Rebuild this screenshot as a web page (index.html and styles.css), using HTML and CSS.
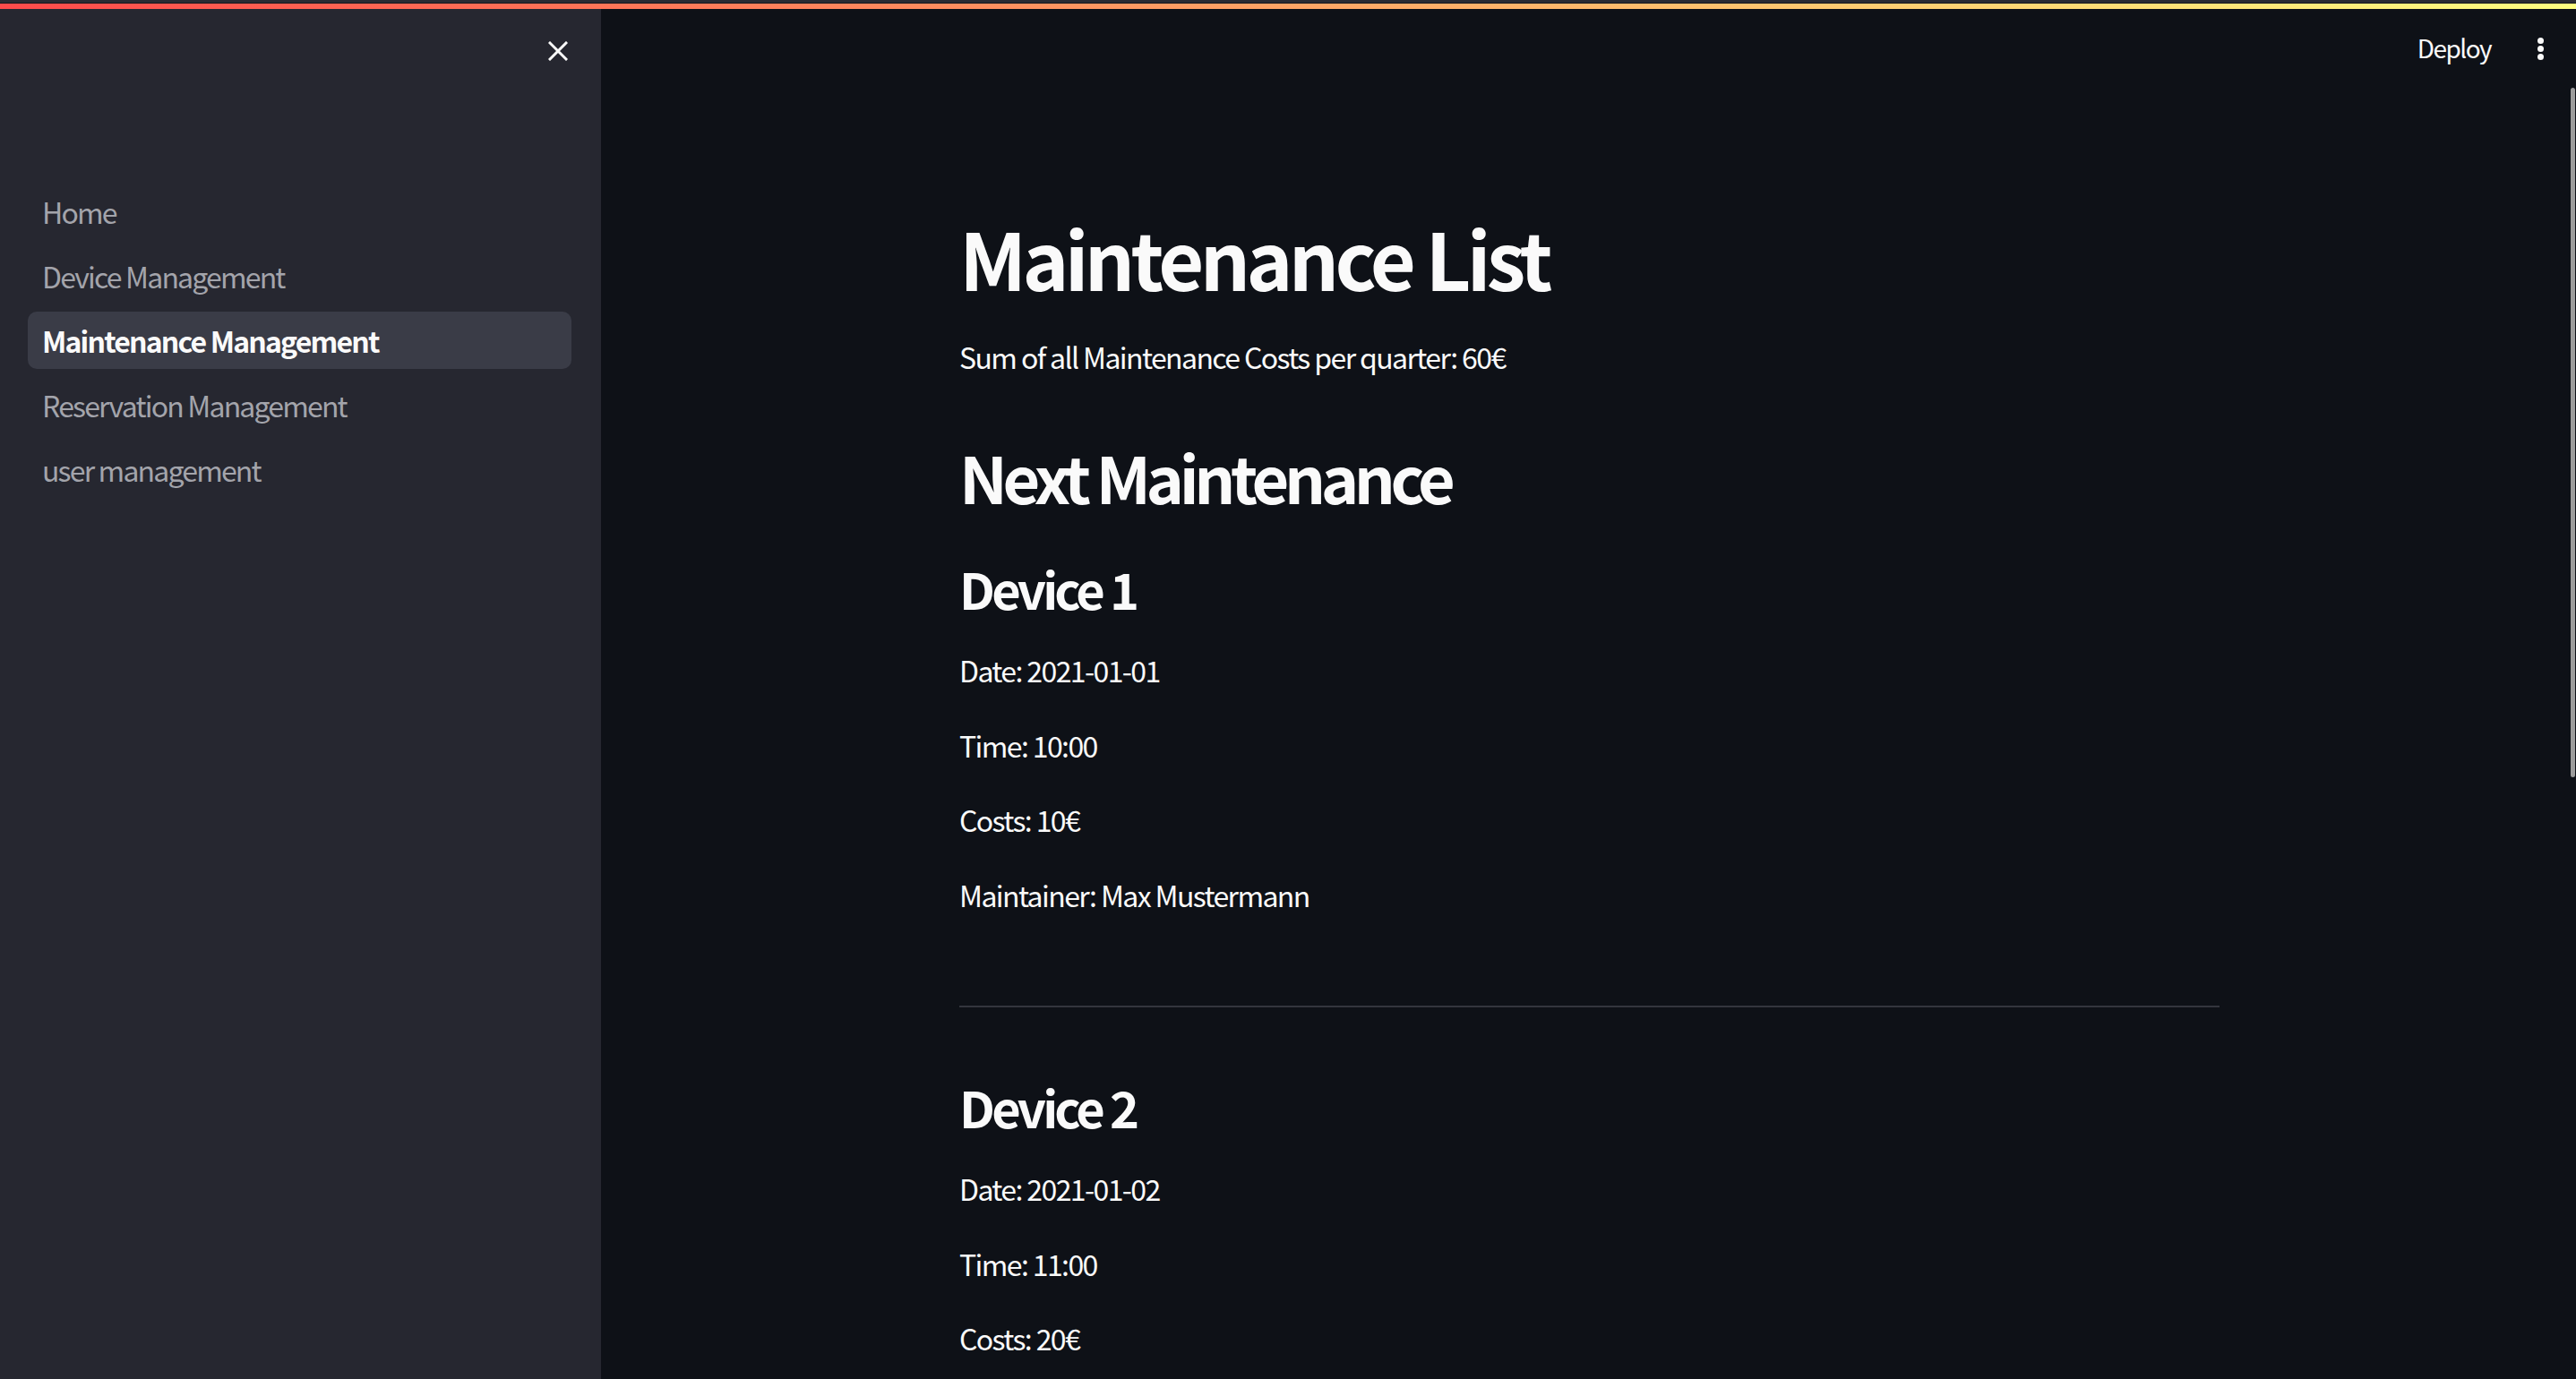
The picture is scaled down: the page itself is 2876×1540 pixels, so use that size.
FILE: index.html
```html
<!DOCTYPE html>
<html lang="en">
<head>
<meta charset="utf-8">
<title>Maintenance Management</title>
<link rel="stylesheet" href="styles.css">
</head>
<body>
<div class="page">
  <div class="topstrip"></div>
  <div class="decoration"></div>
  <div class="app">
    <aside class="sidebar">
      <div class="sidebar-head">
        <button class="close-btn" aria-label="Close sidebar">
          <svg width="22" height="22" viewBox="0 0 22 22"><path d="M2 2 L20 20 M20 2 L2 20" stroke="#fafafa" stroke-width="3" stroke-linecap="square" fill="none"/></svg>
        </button>
      </div>
      <nav class="nav">
        <a class="nav-item">Home</a>
        <a class="nav-item">Device Management</a>
        <a class="nav-item active">Maintenance Management</a>
        <a class="nav-item">Reservation Management</a>
        <a class="nav-item">user management</a>
      </nav>
    </aside>
    <main class="main">
      <header class="header">
        <span class="deploy">Deploy</span>
        <span class="menu-dots"><i></i><i></i><i></i></span>
      </header>
      <div class="content">
        <h1 class="title">Maintenance List</h1>
        <p class="text sum">Sum of all Maintenance Costs per quarter: 60€</p>
        <h2 class="subtitle">Next Maintenance</h2>
        <h3 class="device">Device 1</h3>
        <p class="text first">Date: 2021-01-01</p>
        <p class="text">Time: 10:00</p>
        <p class="text">Costs: 10€</p>
        <p class="text">Maintainer: Max Mustermann</p>
        <hr class="divider">
        <h3 class="device after-hr">Device 2</h3>
        <p class="text first">Date: 2021-01-02</p>
        <p class="text">Time: 11:00</p>
        <p class="text">Costs: 20€</p>
        <p class="text">Maintainer: Max Mustermann</p>
      </div>
      <div class="scroll-thumb"></div>
    </main>
  </div>
</div>
</body>
</html>
```
FILE: styles.css
```css
* { box-sizing: border-box; }
html, body {
  margin: 0;
  padding: 0;
  height: 100%;
  overflow: hidden;
  background: #0e1117;
}
body {
  font-family: "Noto Sans CJK SC", "Source Sans Pro", "Noto Sans", sans-serif;
  color: #fafafa;
}
.page {
  display: flex;
  flex-direction: column;
  height: 100vh;
}
.topstrip {
  height: 4px;
  background: #2b2b33;
  border-bottom: 1px solid #16171d;
  flex: none;
}
.decoration {
  height: 6px;
  flex: none;
  background: linear-gradient(90deg, #ff4b4b, #fffd80);
}
.app {
  flex: 1;
  display: flex;
  min-height: 0;
}
.sidebar {
  width: 671px;
  flex: none;
  background: #262730;
  display: flex;
  flex-direction: column;
}
.sidebar-head {
  height: 194px;
  display: flex;
  justify-content: flex-end;
  align-items: flex-start;
  padding: 36px 37px 0 0;
}
.close-btn {
  background: none;
  border: none;
  padding: 0;
  width: 22px;
  height: 22px;
  display: flex;
  cursor: pointer;
}
.nav {
  display: flex;
  flex-direction: column;
  gap: 8px;
  padding: 0 33px 0 31px;
}
.nav-item {
  display: block;
  height: 64px;
  line-height: 64px;
  padding-left: 16px;
  font-size: 32px;
  letter-spacing: -0.057em;
  color: #a3a4ab;
  border-radius: 10px;
  white-space: nowrap;
}
.nav-item.active {
  background: #3a3c47;
  color: #fafafa;
  font-weight: 600;
}
.main {
  flex: 1;
  position: relative;
  display: flex;
  flex-direction: column;
  min-width: 0;
}
.header {
  height: 110px;
  flex: none;
  display: flex;
  justify-content: flex-end;
  align-items: flex-start;
  padding: 23px 36px 0 0;
}
.deploy {
  font-size: 28px;
  line-height: 40px;
  letter-spacing: -0.055em;
  color: #fafafa;
  margin-right: 52px;
}
.menu-dots {
  display: flex;
  flex-direction: column;
  gap: 2px;
  padding-top: 9px;
}
.menu-dots i {
  display: block;
  width: 7px;
  height: 7px;
  border-radius: 50%;
  background: #fafafa;
}
.content {
  width: 1409px;
  margin: 0 auto;
  padding-left: 2px;
}
.title {
  margin: 114px 0 0;
  font-size: 88px;
  line-height: 106px;
  font-weight: 700;
  letter-spacing: -0.053em;
}
.text {
  margin: 32.5px 0 0;
  font-size: 32px;
  line-height: 51px;
  letter-spacing: -0.05em;
}
.sum { margin-top: 33px; }
.subtitle {
  margin: 65px 0 0;
  font-size: 72px;
  line-height: 86px;
  font-weight: 600;
  letter-spacing: -0.075em;
}
.device {
  margin: 48px 0 0;
  font-size: 56px;
  line-height: 67px;
  font-weight: 600;
  letter-spacing: -0.068em;
}
.device.after-hr { margin-top: 77.5px; }
.text.first { margin-top: 33px; }
.divider {
  margin: 98px 0 0;
  border: none;
  height: 2px;
  background: #33353d;
}
.scroll-thumb {
  position: absolute;
  right: 1px;
  top: 88px;
  width: 5px;
  height: 770px;
  background: #9c9c9c;
  border-radius: 3px;
}
```
